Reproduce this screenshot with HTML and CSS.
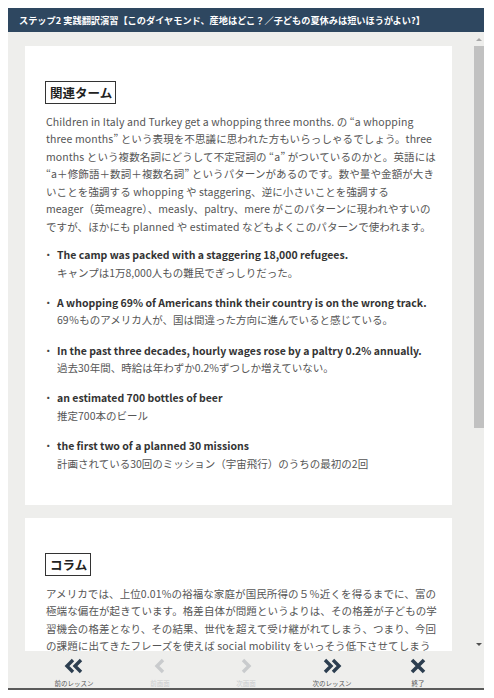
FILE: index.html
```html
<!DOCTYPE html>
<html lang="ja">
<head>
<meta charset="utf-8">
<title>ステップ2 実践翻訳演習</title>
<link rel="stylesheet" href="styles.css">
</head>
<body>
<div class="app">
  <header class="header">ステップ2 実践翻訳演習【このダイヤモンド、産地はどこ？／子どもの夏休みは短いほうがよい?】</header>
  <div class="main">
    <div class="scroll">
      <section class="card">
        <h2 class="tag">関連ターム</h2>
        <p class="para">Children in Italy and Turkey get a whopping three months. の “a whopping three months” という表現を不思議に思われた方もいらっしゃるでしょう。three months という複数名詞にどうして不定冠詞の “a” がついているのかと。英語には “a＋修飾語＋数詞＋複数名詞” というパターンがあるのです。数や量や金額が大きいことを強調する whopping や staggering、逆に小さいことを強調する <span class="term">meager（英meagre）、measly、</span>paltry、mere がこのパターンに現われやすいのですが、ほかにも planned や estimated などもよくこのパターンで使われます。</p>
        <ul class="examples">
          <li><span class="en">The camp was packed with a staggering 18,000 refugees.</span><span class="ja">キャンプは1万8,000人もの難民でぎっしりだった。</span></li>
          <li><span class="en">A whopping 69% of Americans think their country is on the wrong track.</span><span class="ja">69％ものアメリカ人が、国は間違った方向に進んでいると感じている。</span></li>
          <li><span class="en">In the past three decades, hourly wages rose by a paltry 0.2% annually.</span><span class="ja">過去30年間、時給は年わずか0.2%ずつしか増えていない。</span></li>
          <li><span class="en">an estimated 700 bottles of beer</span><span class="ja">推定700本のビール</span></li>
          <li><span class="en">the first two of a planned 30 missions</span><span class="ja">計画されている30回のミッション（宇宙飛行）のうちの最初の2回</span></li>
        </ul>
      </section>
      <section class="card">
        <h2 class="tag">コラム</h2>
        <p class="para">アメリカでは、上位0.01%の裕福な家庭が国民所得の５％近くを得るまでに、富の極端な偏在が起きています。格差自体が問題というよりは、その格差が子どもの学習機会の格差となり、その結果、世代を超えて受け継がれてしまう、つまり、今回の課題に出てきたフレーズを使えば social mobility をいっそう低下させてしまうことが懸念されているのです。</p>
      </section>
    </div>
    <div class="scrollbar">
      <div class="sb-btn"><span class="tri-up"></span></div>
      <div class="sb-thumb"></div>
      <div class="sb-track"></div>
      <div class="sb-btn"><span class="tri-down"></span></div>
    </div>
  </div>
  <nav class="toolbar">
    <div class="tool">
      <svg width="20" height="16" viewBox="0 0 20 16"><path d="M9 2 L3 8 L9 14 M17 2 L11 8 L17 14" fill="none" stroke="#2c3e50" stroke-width="3.4"/></svg>
      <span>前のレッスン</span>
    </div>
    <div class="tool off">
      <svg width="20" height="16" viewBox="0 0 20 16"><path d="M13 2 L7 8 L13 14" fill="none" stroke="#c9cbcd" stroke-width="3.4"/></svg>
      <span>前画面</span>
    </div>
    <div class="tool off">
      <svg width="20" height="16" viewBox="0 0 20 16"><path d="M7 2 L13 8 L7 14" fill="none" stroke="#c9cbcd" stroke-width="3.4"/></svg>
      <span>次画面</span>
    </div>
    <div class="tool">
      <svg width="20" height="16" viewBox="0 0 20 16"><path d="M3 2 L9 8 L3 14 M11 2 L17 8 L11 14" fill="none" stroke="#2c3e50" stroke-width="3.4"/></svg>
      <span>次のレッスン</span>
    </div>
    <div class="tool">
      <svg width="20" height="16" viewBox="0 0 20 16"><path d="M4 2 L16 14 M16 2 L4 14" fill="none" stroke="#2c3e50" stroke-width="3.6"/></svg>
      <span>終了</span>
    </div>
  </nav>
</div>
</body>
</html>
```
FILE: styles.css
```css
html, body {
  margin: 0;
  padding: 0;
  background: #ffffff;
}
body {
  padding: 8px;
  font-family: "Noto Sans CJK JP", "Noto Sans", sans-serif;
}
.app {
  width: 476px;
  height: 682px;
  display: flex;
  flex-direction: column;
  background: #eeeeec;
}
.header {
  height: 24px;
  flex: none;
  display: flex;
  align-items: center;
  padding-left: 11px;
  background: #2e4760;
  color: #ffffff;
  font-size: 9.2px;
  font-weight: bold;
  white-space: nowrap;
  overflow: hidden;
}
.main {
  flex: 1;
  display: flex;
  min-height: 0;
}
.scroll {
  flex: 1;
  overflow: hidden;
  padding: 14px 22px 0 17px;
}
.card {
  background: #ffffff;
  padding: 33px 13px 33px 21px;
  margin-bottom: 13px;
}
.tag {
  display: inline-block;
  margin: 0 0 0 -1px;
  border: 1px solid #333333;
  padding: 0 3px 0 4px;
  height: 21px;
  line-height: 21px;
  font-size: 12.5px;
  font-weight: bold;
  color: #222222;
}
.para {
  margin: 8.5px 0 0;
  font-size: 10.5px;
  line-height: 17.5px;
  letter-spacing: 0.1px;
  color: #555555;
}
.term {
  white-space: nowrap;
}
.examples {
  list-style: none;
  margin: 11px 0 0;
  padding: 0;
}
.examples li {
  position: relative;
  padding-left: 11px;
  margin-bottom: 12.8px;
  font-size: 10.5px;
  line-height: 17.5px;
}
.examples li:last-child {
  margin-bottom: 0;
}
.examples li::before {
  content: "・";
  position: absolute;
  left: -3px;
  top: 0;
  color: #444444;
}
.en {
  display: block;
  font-weight: bold;
  color: #333333;
}
.ja {
  display: block;
  color: #555555;
}
.scrollbar {
  width: 10px;
  flex: none;
  display: flex;
  flex-direction: column;
  background: #eeeeec;
}
.sb-btn {
  height: 14px;
  flex: none;
  display: flex;
  align-items: center;
  justify-content: center;
}
.tri-up {
  width: 0;
  height: 0;
  border-left: 3px solid transparent;
  border-right: 3px solid transparent;
  border-bottom: 3px solid #a8a8a8;
}
.tri-down {
  width: 0;
  height: 0;
  border-left: 3px solid transparent;
  border-right: 3px solid transparent;
  border-top: 3px solid #505050;
}
.sb-thumb {
  height: 382px;
  flex: none;
  background: #c1c1c1;
}
.sb-track {
  flex: 1;
}
.toolbar {
  height: 37px;
  flex: none;
  display: flex;
  justify-content: center;
  border-bottom: 2px solid #5a5a5a;
  background: #eeeeec;
}
.tool {
  width: 86px;
  display: flex;
  flex-direction: column;
  align-items: center;
  padding-top: 7px;
}
.tool svg {
  display: block;
}
.tool span {
  margin-top: 5px;
  font-size: 6.5px;
  line-height: 8px;
  color: #555555;
}
.tool.off span {
  color: #c9cbcd;
}
```
